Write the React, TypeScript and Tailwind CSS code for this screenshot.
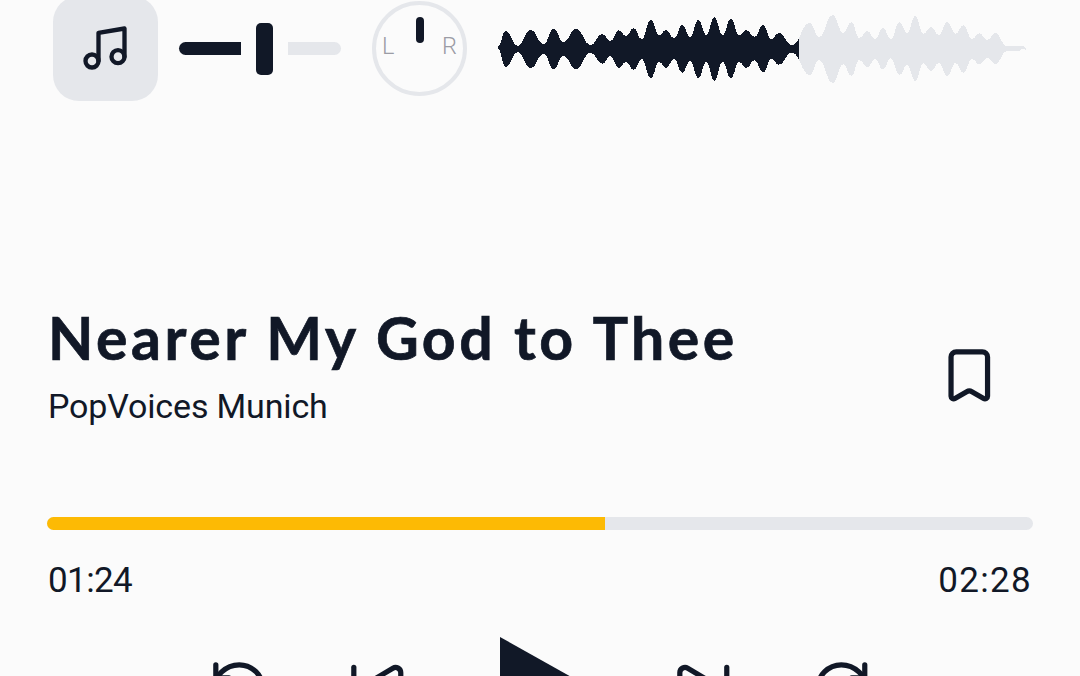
import { Music, RotateCcw, RotateCw, SkipBack, SkipForward } from 'lucide-react'

// [x, top, bottom] of every peak and dip in the wave
const wave: number[][] = [
    [24, 140, 146], [47, 93, 201], [83, 138, 156], [122, 90, 204], [161, 132, 162],
    [191, 86, 207], [220, 126, 168], [258, 87, 207], [302, 135, 158], [337, 102, 191],
    [361, 124, 168], [386, 91, 204], [408, 108, 186], [431, 84, 210], [455, 118, 177],
    [482, 60, 234], [508, 105, 186], [528, 90, 204], [552, 115, 177], [577, 75, 218],
    [600, 111, 183], [625, 60, 234], [649, 105, 186], [673, 52, 242], [698, 105, 186],
    [722, 57, 234], [748, 105, 186], [769, 90, 204], [794, 111, 180], [819, 75, 218],
    [844, 118, 177], [866, 99, 194], [906, 135, 158], [959, 69, 225], [987, 111, 180],
    [1028, 45, 249], [1060, 99, 193], [1084, 66, 228], [1108, 114, 180], [1132, 93, 202],
    [1155, 117, 177], [1179, 84, 209], [1202, 117, 175], [1229, 67, 225], [1251, 99, 195],
    [1276, 48, 243], [1300, 102, 190], [1323, 81, 213], [1346, 105, 189], [1372, 66, 228],
    [1397, 102, 189], [1420, 75, 219], [1446, 117, 177], [1468, 100, 193], [1492, 120, 174],
    [1516, 99, 192], [1550, 138, 154], [1585, 138, 153], [1600, 139, 146], [1612, 150, 152],
]

const curve = (points: number[][]) => {
    let d = ''
    for (let i = 1; i < points.length; i++) {
        const [x0, y0] = points[i - 1]
        const [x1, y1] = points[i]
        const c = (x1 - x0) * 0.46
        d += `C${x0 + c} ${y0} ${x1 - c} ${y1} ${x1} ${y1}`
    }
    return d
}

const top = wave.map((p) => [p[0], p[1]])
const bottom = wave.map((p) => [p[0], p[2]]).reverse()
const wavePath = `M24 140${curve(top)}L1612 152${curve(bottom)}Z`

const Waveform = () => (
    <svg className="mt-[3px] ml-[31px] h-[100px] w-[530px] shrink-0" viewBox="24 0 1590 300" shapeRendering="crispEdges">
        <clipPath id="played">
            <rect x="0" y="0" width="927" height="300" />
        </clipPath>
        <path d={wavePath} fill="#e5e7eb" />
        <path d={wavePath} fill="#111827" clipPath="url(#played)" />
    </svg>
)

const VolumeSlider = () => (
    <div className="ml-[21px] flex shrink-0 items-center">
        <div className="h-[13px] w-[61.5px] rounded-l-full bg-[#111827]" />
        <div className="mx-[15px] h-[52px] w-[17px] rounded-[5px] bg-[#111827]" />
        <div className="h-[13px] w-[53.5px] rounded-r-full bg-[#e5e7eb]" />
    </div>
)

const PanKnob = () => (
    <div className="relative -mt-px ml-[31px] flex h-[95px] w-[95px] shrink-0 items-center justify-between rounded-full border-4 border-[#e5e7eb] pr-[6px] pl-[6px] text-[23.5px] leading-none font-light text-[#9b9ca5]">
        <span className="-mt-[3px]">L</span>
        <span className="-mt-[3px]">R</span>
        <div className="absolute top-[12px] left-[40px] h-[26px] w-2 rounded-full bg-[#111827]" />
    </div>
)

const BookmarkIcon = () => (
    <svg
        className="h-[62.6px] w-[62.6px] shrink-0"
        viewBox="0 0 24 24"
        fill="none"
        stroke="currentColor"
        strokeWidth="2"
        strokeLinecap="round"
        strokeLinejoin="round"
    >
        <path d="M17 3a2 2 0 0 1 2 2v15a1 1 0 0 1-1.496.868l-4.512-2.578a2 2 0 0 0-1.984 0l-4.512 2.578A1 1 0 0 1 5 20V5a2 2 0 0 1 2-2z" />
    </svg>
)

const App = () => {
    return (
        <div className="h-[676px] w-[1080px] overflow-hidden bg-[#fbfbfb] font-['Roboto','Liberation_Sans',sans-serif] text-[#111827]">
            <div className="-mt-1 flex h-[105px] items-center pl-[53px]">
                <div className="flex h-[105px] w-[105px] shrink-0 items-center justify-center rounded-[26px] bg-[#e5e7eb] pb-[2px]">
                    <Music size={52} className="mr-px shrink-0" />
                </div>
                <VolumeSlider />
                <PanKnob />
                <Waveform />
            </div>

            <div className="mt-[201px] flex h-[143px] items-start justify-between pr-[79px] pl-12">
                <div className="whitespace-nowrap">
                    <h1 className="mt-px font-['Lato',sans-serif] text-[59px] leading-[70px] font-bold tracking-[3.5px] [-webkit-text-stroke:0.7px_#111827]">Nearer My God to Thee</h1>
                    <p className="mt-[13px] text-[34px] leading-[40px] tracking-[-0.15px]">PopVoices Munich</p>
                </div>
                <div className="mt-[42px]">
                    <BookmarkIcon />
                </div>
            </div>

            <div className="mx-[47px] mt-[72px] h-[13px] w-[986px] overflow-hidden rounded-full bg-[#e5e7eb]">
                <div className="h-full w-[558px] bg-[#fdba04]" />
            </div>
            <div className="mt-[31px] flex h-10 justify-between pr-[48px] pl-12 text-[35px] leading-[40px]">
                <span className="tracking-[-0.6px]">01:24</span>
                <span className="tracking-[1.3px]">02:28</span>
            </div>

            <div className="mt-[35px] flex h-[104px] items-center pl-[208px]">
                <RotateCcw size={62.6} className="shrink-0" />
                <SkipBack size={62.6} className="ml-[75.6px] shrink-0" />
                <svg className="ml-[91.6px] h-[102px] w-[91px] shrink-0" viewBox="0 0 91 102" fill="currentColor">
                    <path d="M0 0L91 51L0 102Z" />
                </svg>
                <SkipForward size={62.6} className="ml-[81px] shrink-0" />
                <RotateCw size={62.6} className="ml-[75.4px] shrink-0" />
            </div>
        </div>
    )
}

export default App
